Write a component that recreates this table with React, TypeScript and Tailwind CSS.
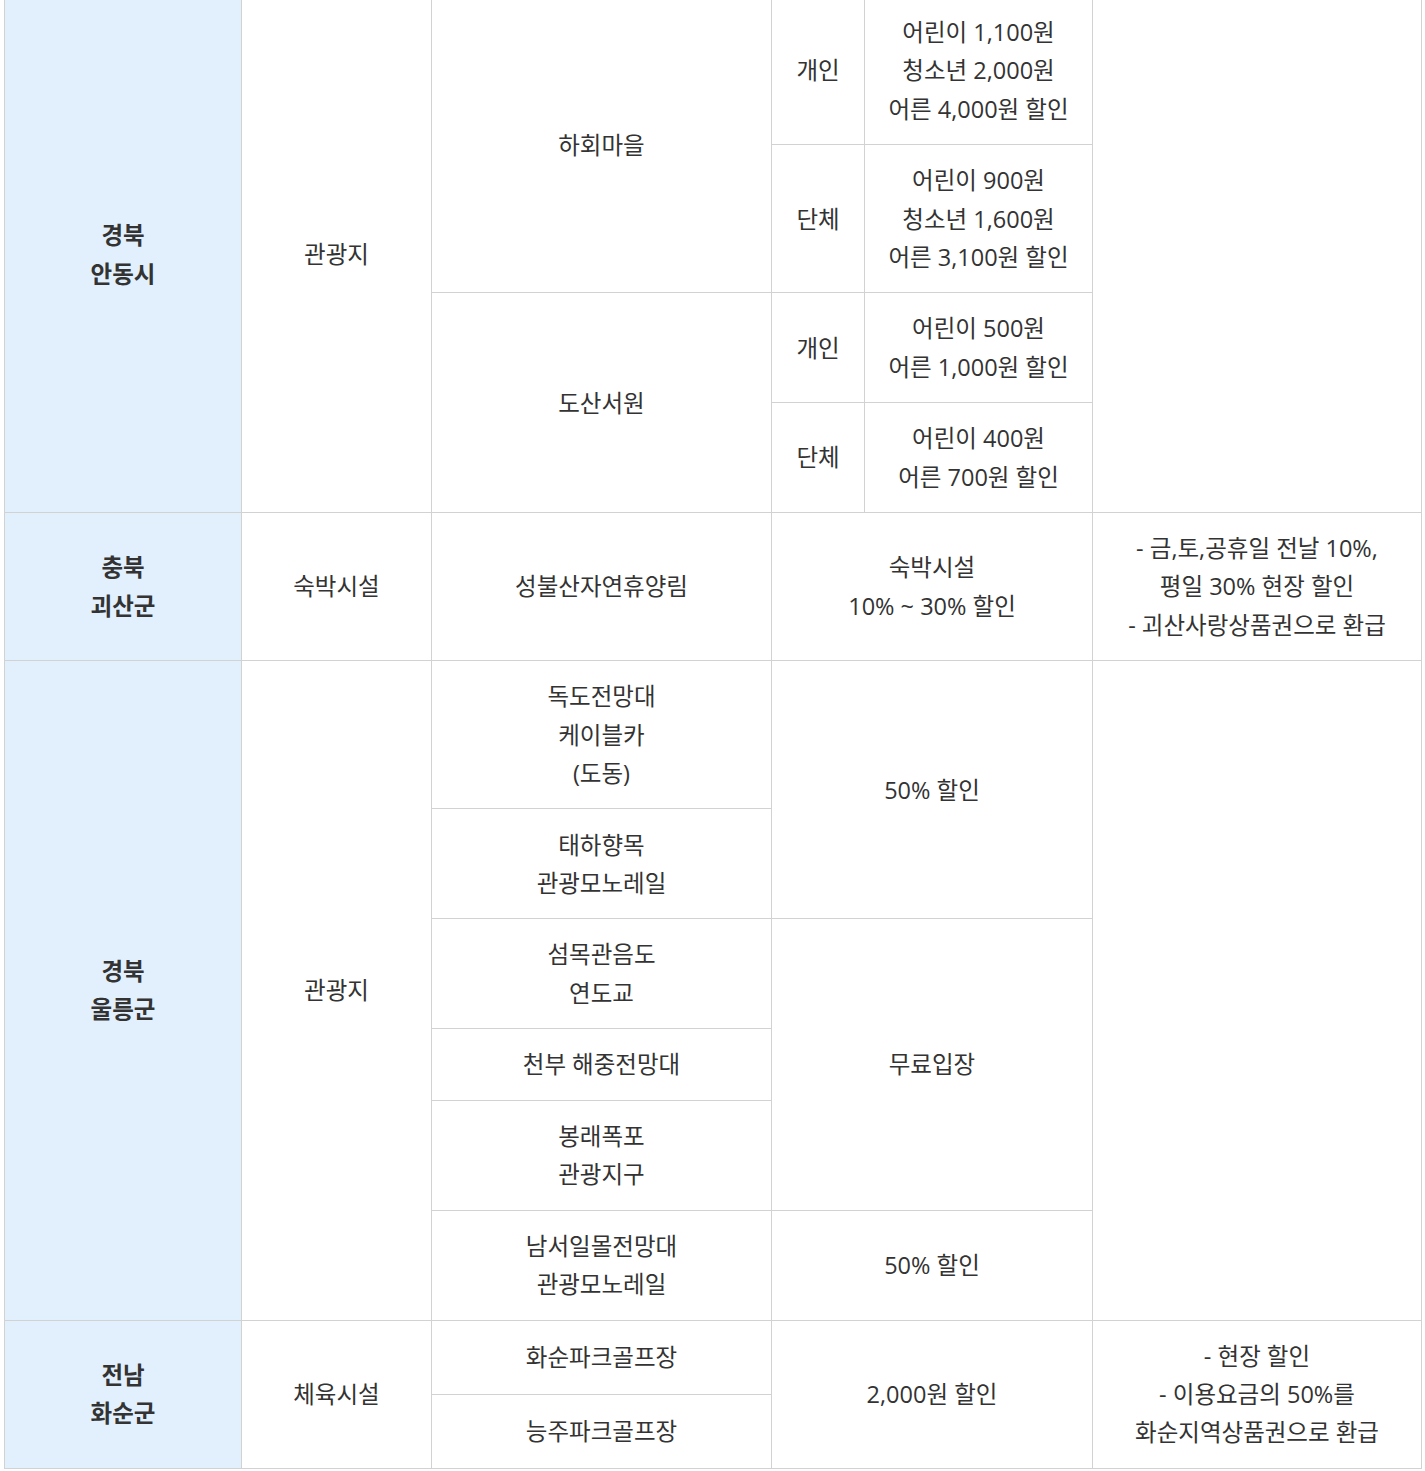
import React from 'react'

const td = 'border border-[#d2d2d2] px-3 py-[16.25px] text-center align-middle'
const th = 'border border-[#d2d2d2] bg-[#e2f0fe] px-3 py-[16.25px] text-center align-middle font-bold'

function Lines({ items }: { items: string[] }) {
  return (
    <>
      {items.map((t, i) => (
        <React.Fragment key={i}>
          {i > 0 && <br />}
          {t}
        </React.Fragment>
      ))}
    </>
  )
}

export default function App() {
  return (
    <div className="min-h-screen bg-white overflow-hidden">
      <div className="pl-[4px] pr-[4px] -mt-[4px]">
        <table
          className="w-[1417px] table-fixed border-collapse text-[23.5px] leading-[38.2px] text-[#333]"
          style={{ fontFamily: '"Open Sans", "Noto Sans CJK KR", sans-serif' }}
        >
          <colgroup>
            <col className="w-[237px]" />
            <col className="w-[190px]" />
            <col className="w-[340px]" />
            <col className="w-[93px]" />
            <col className="w-[228px]" />
            <col className="w-[329px]" />
          </colgroup>
          <tbody>
            {/* 경북 안동시 */}
            <tr>
              <th rowSpan={4} className={th}><Lines items={['경북', '안동시']} /></th>
              <td rowSpan={4} className={td}>관광지</td>
              <td rowSpan={2} className={td}>하회마을</td>
              <td className={td}>개인</td>
              <td className={td}><Lines items={['어린이 1,100원', '청소년 2,000원', '어른 4,000원 할인']} /></td>
              <td rowSpan={4} className={td}></td>
            </tr>
            <tr>
              <td className={td}>단체</td>
              <td className={td}><Lines items={['어린이 900원', '청소년 1,600원', '어른 3,100원 할인']} /></td>
            </tr>
            <tr>
              <td rowSpan={2} className={td}>도산서원</td>
              <td className={td}>개인</td>
              <td className={td}><Lines items={['어린이 500원', '어른 1,000원 할인']} /></td>
            </tr>
            <tr>
              <td className={td}>단체</td>
              <td className={td}><Lines items={['어린이 400원', '어른 700원 할인']} /></td>
            </tr>

            {/* 충북 괴산군 */}
            <tr>
              <th className={th}><Lines items={['충북', '괴산군']} /></th>
              <td className={td}>숙박시설</td>
              <td className={td}>성불산자연휴양림</td>
              <td colSpan={2} className={td}><Lines items={['숙박시설', '10% ~ 30% 할인']} /></td>
              <td className={td}><Lines items={['- 금,토,공휴일 전날 10%,', '평일 30% 현장 할인', '- 괴산사랑상품권으로 환급']} /></td>
            </tr>

            {/* 경북 울릉군 */}
            <tr>
              <th rowSpan={6} className={th}><Lines items={['경북', '울릉군']} /></th>
              <td rowSpan={6} className={td}>관광지</td>
              <td className={td}><Lines items={['독도전망대', '케이블카', '(도동)']} /></td>
              <td colSpan={2} rowSpan={2} className={td}>50% 할인</td>
              <td rowSpan={6} className={td}></td>
            </tr>
            <tr>
              <td className={td}><Lines items={['태하향목', '관광모노레일']} /></td>
            </tr>
            <tr>
              <td className={td}><Lines items={['섬목관음도', '연도교']} /></td>
              <td colSpan={2} rowSpan={3} className={td}>무료입장</td>
            </tr>
            <tr>
              <td className={td}>천부 해중전망대</td>
            </tr>
            <tr>
              <td className={td}><Lines items={['봉래폭포', '관광지구']} /></td>
            </tr>
            <tr>
              <td className={td}><Lines items={['남서일몰전망대', '관광모노레일']} /></td>
              <td colSpan={2} className={td}>50% 할인</td>
            </tr>

            {/* 전남 화순군 */}
            <tr>
              <th rowSpan={2} className={th}><Lines items={['전남', '화순군']} /></th>
              <td rowSpan={2} className={td}>체육시설</td>
              <td className={td}>화순파크골프장</td>
              <td colSpan={2} rowSpan={2} className={td}>2,000원 할인</td>
              <td rowSpan={2} className={td}><Lines items={['- 현장 할인', '- 이용요금의 50%를', '화순지역상품권으로 환급']} /></td>
            </tr>
            <tr>
              <td className={td}>능주파크골프장</td>
            </tr>
          </tbody>
        </table>
      </div>
    </div>
  )
}
